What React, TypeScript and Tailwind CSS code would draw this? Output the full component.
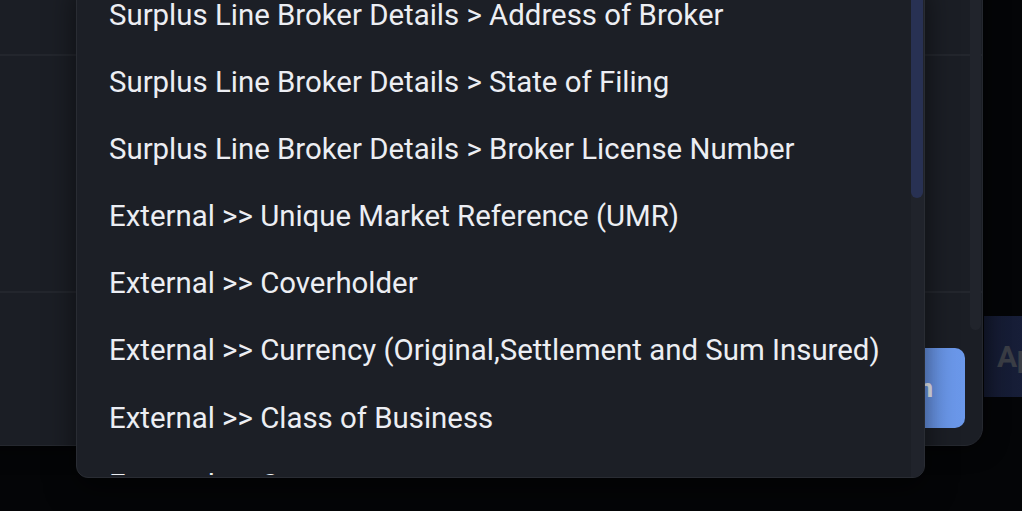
const options = [
  "Surplus Line Broker Details > Address of Broker",
  "Surplus Line Broker Details > State of Filing",
  "Surplus Line Broker Details > Broker License Number",
  "External >> Unique Market Reference (UMR)",
  "External >> Coverholder",
  "External >> Currency (Original,Settlement and Sum Insured)",
  "External >> Class of Business",
  "External >> Country",
  "External >> Risk Inception Date",
];

export default function App() {
  return (
    <div className="relative h-[511px] w-[1022px] overflow-hidden bg-[#040507] font-['Roboto','Liberation_Sans',sans-serif]">
      {/* Page behind the dialog */}
      <div className="flex h-full items-start pl-[984px] pt-[316px]">
        <button className="flex h-[81px] shrink-0 items-center bg-gradient-to-r from-[#141a30] to-[#1b2446] px-[13px] text-[30px] font-bold text-[#3a3d45]">
          Apply
        </button>
      </div>

      {/* Dialog */}
      <div className="absolute left-[-30px] top-[-120px] flex h-[566px] w-[1013px] flex-col overflow-hidden rounded-[18px] border border-[#25282f] bg-[#1b1e25] shadow-[0_0_24px_rgba(0,0,0,0.6)]">
        <div className="relative flex min-h-0 flex-1 flex-col">
          <div className="h-[175px] border-b-2 border-[#23262d]" />
          <div className="h-[237px] border-b-2 border-[#23262d]" />
          <div className="flex-1" />
          {/* scrollbar track */}
          <div className="absolute bottom-0 right-[1px] top-0 w-[11px] rounded-b-full bg-[#21242c]" />
        </div>
        <div className="flex justify-end px-[17px] pb-[17px] pt-[18px]">
          <button className="flex h-[80px] items-center rounded-[10px] bg-gradient-to-r from-[#5a84d8] to-[#6b98ea] px-[32px] text-[26px] font-bold text-[#eef1f7]">
            Save Configuration
          </button>
        </div>
      </div>

      {/* Dropdown menu */}
      <div className="absolute left-[76px] top-[-20px] h-[498px] w-[849px] overflow-hidden rounded-b-[12px] border border-[#292c33] bg-[#1c1f26] pb-[2px] shadow-[0_10px_30px_rgba(0,0,0,0.55)]">
        <div className="h-full overflow-hidden pr-[13px]">
          {options.map((o) => (
            <div
              key={o}
              className="flex h-[67.2px] items-center whitespace-nowrap pl-[32px] text-[29.4px] text-[#eceef3]"
            >
              {o}
            </div>
          ))}
        </div>
        <div className="absolute bottom-0 right-0 top-0 w-[13px] bg-[#20232b]">
          <div className="h-[217px] w-[12px] rounded-b-full bg-[#283153]" />
        </div>
      </div>
    </div>
  );
}
